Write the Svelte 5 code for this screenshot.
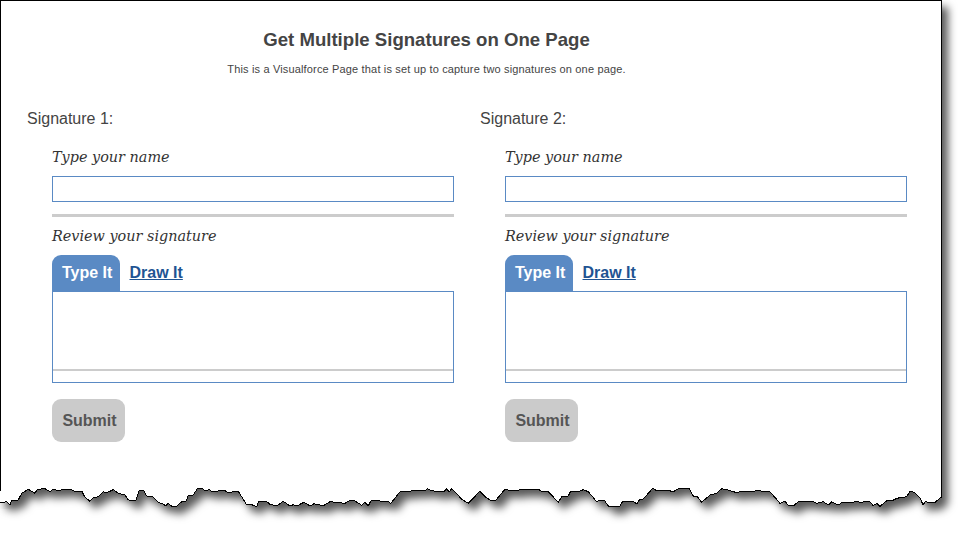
<script>
	// torn bottom edge, traced from the reference (x, y)
	const tornLeft = [[0,188],[20,185],[30,195],[35,181],[55,180],[65,160],[85,148],[105,160],[112,148],[135,146],[150,155],[160,147],[175,153],[185,149],[215,149],[225,155],[245,153],[255,172],[270,184],[280,174],[295,170],[310,155],[320,158],[340,149],[355,160],[375,165],[385,180],[408,181],[418,150],[430,150],[440,168],[455,168],[475,187],[490,192],[497,198],[505,190],[515,199],[530,199],[545,185],[557,186],[565,167],[580,165],[592,146],[610,147],[615,153],[628,149],[635,154],[675,152],[685,159],[700,155],[715,154],[740,195],[755,194],[770,200],[775,185],[800,185],[810,193],[830,198],[850,184],[870,198],[880,194],[890,198],[912,187],[930,198],[942,191],[970,197],[990,185],[1035,190],[1050,181],[1065,183],[1085,196],[1095,187],[1105,198],[1112,183],[1130,182],[1165,185],[1172,190],[1185,175],[1200,155],[1225,155],[1235,152],[1275,152],[1283,146],[1295,152],[1330,156],[1340,146],[1348,156],[1355,146],[1365,155],[1385,178],[1405,190],[1420,175],[1438,155]];
	const tornRight = [[0,155],[15,170],[30,180],[48,180],[75,148],[95,153],[140,147],[175,147],[185,155],[205,155],[235,187],[245,170],[265,168],[272,153],[300,153],[310,149],[325,155],[350,185],[360,181],[373,181],[385,198],[420,198],[428,184],[460,184],[470,192],[480,177],[490,177],[518,145],[530,152],[550,152],[565,150],[578,156],[595,146],[628,146],[640,168],[650,168],[665,187],[690,165],[710,160],[725,146],[745,150],[770,158],[780,155],[815,155],[830,152],[870,155],[900,190],[915,183],[925,197],[940,198],[955,185],[1000,185],[1010,190],[1030,185],[1045,195],[1055,185],[1075,195],[1085,188],[1115,188],[1130,184],[1145,188],[1155,184],[1170,186],[1180,197],[1190,190],[1200,199],[1220,182],[1235,183],[1250,175],[1280,170],[1290,153],[1305,158],[1320,175],[1330,195],[1335,185],[1345,187],[1365,187],[1385,170]];

	const edge = [
		...tornLeft.map(([x, y]) => [x / 3, 440 + y / 3]),
		...tornRight.map(([x, y]) => [480 + x / 3, 440 + y / 3])
	];
	const sheetPath =
		'M0.5 0.5 L941.5 0.5 ' +
		edge.slice().reverse().map(([x, y]) => `L${x.toFixed(1)} ${y.toFixed(1)}`).join(' ') +
		' Z';

	const signatures = ['Signature 1:', 'Signature 2:'];
</script>

<div class="page">
	<svg class="sheet" width="962" height="544" aria-hidden="true">
		<defs>
			<filter id="paper-shadow" x="-5%" y="-5%" width="110%" height="110%">
				<feDropShadow dx="6" dy="7" stdDeviation="4" flood-color="#000" flood-opacity="0.65" />
			</filter>
		</defs>
		<path d={sheetPath} fill="#fff" stroke="#000" stroke-width="1" stroke-linejoin="round" shape-rendering="crispEdges" filter="url(#paper-shadow)" />
	</svg>

	<div class="content">
		<header>
			<h1>Get Multiple Signatures on One Page</h1>
			<p>This is a Visualforce Page that is set up to capture two signatures on one page.</p>
		</header>

		<div class="columns">
			{#each signatures as title}
				<section>
					<h2>{title}</h2>
					<div class="form">
						<label>
							<span class="caption">Type your name</span>
							<input type="text" />
						</label>
						<hr />
						<div class="caption review">Review your signature</div>
						<div class="tabs">
							<span class="tab active">Type It</span>
							<a class="tab" href="#draw">Draw It</a>
						</div>
						<div class="pad"><div class="baseline"></div></div>
						<button>Submit</button>
					</div>
				</section>
			{/each}
		</div>
	</div>
</div>

<style>
	:global(body) {
		background: #fff;
	}

	.page {
		position: relative;
		width: 962px;
		height: 544px;
		overflow: hidden;
		font-family: 'Liberation Sans', Arial, sans-serif;
		color: #444;
	}

	.sheet {
		position: absolute;
		left: 0;
		top: 0;
	}

	.content {
		position: relative;
		padding: 29px 0 0 27px;
	}

	header {
		width: 799px;
		text-align: center;
	}

	h1 {
		margin: 0;
		font-size: 18.6px;
		line-height: 21px;
		font-weight: bold;
	}

	header p {
		margin: 13px 0 0;
		font-size: 11px;
		letter-spacing: 0.16px;
		line-height: 12px;
	}

	.columns {
		display: flex;
		margin-top: 35px;
	}

	section {
		width: 453px;
	}

	h2 {
		margin: 0;
		font-size: 16px;
		line-height: 18px;
		font-weight: normal;
	}

	.form {
		width: 402px;
		margin: 20px 0 0 25px;
	}

	label {
		display: block;
	}

	.caption {
		display: block;
		font-family: 'DejaVu Serif', 'Liberation Serif', serif;
		font-style: italic;
		font-size: 14.4px;
		line-height: 18px;
		color: #333;
	}

	input {
		display: block;
		box-sizing: border-box;
		width: 100%;
		height: 26px;
		margin: 10px 0 0;
		border: 1px solid #5a8ac4;
		padding: 0 4px;
		background: #fff;
	}

	hr {
		height: 3px;
		margin: 12px 0 0;
		border: 0;
		background: #ccc;
	}

	.review {
		margin-top: 10px;
	}

	.tabs {
		display: flex;
		margin-top: 10px;
		align-items: stretch;
	}

	.tab {
		display: block;
		padding: 0 9.5px;
		height: 36px;
		font-size: 16px;
		font-weight: bold;
		line-height: 35px;
		white-space: nowrap;
		color: #1f5493;
	}

	.active {
		width: 68px;
		box-sizing: border-box;
		padding: 0 10px;
		border-radius: 9px 9px 0 0;
		background: #5a8ac4;
		color: #fff;
	}

	a.tab {
		text-decoration: underline;
	}

	.pad {
		box-sizing: border-box;
		height: 92px;
		border: 1px solid #5a8ac4;
		padding-top: 77px;
		background: #fff;
	}

	.baseline {
		height: 2px;
		background: #ccc;
	}

	button {
		display: block;
		width: 73px;
		height: 43px;
		margin-top: 16px;
		border: 0;
		border-radius: 9px;
		padding: 0 0 0 2px;
		background: #cbcbcb;
		color: #555;
		font-family: inherit;
		font-size: 16px;
		font-weight: bold;
	}
</style>
